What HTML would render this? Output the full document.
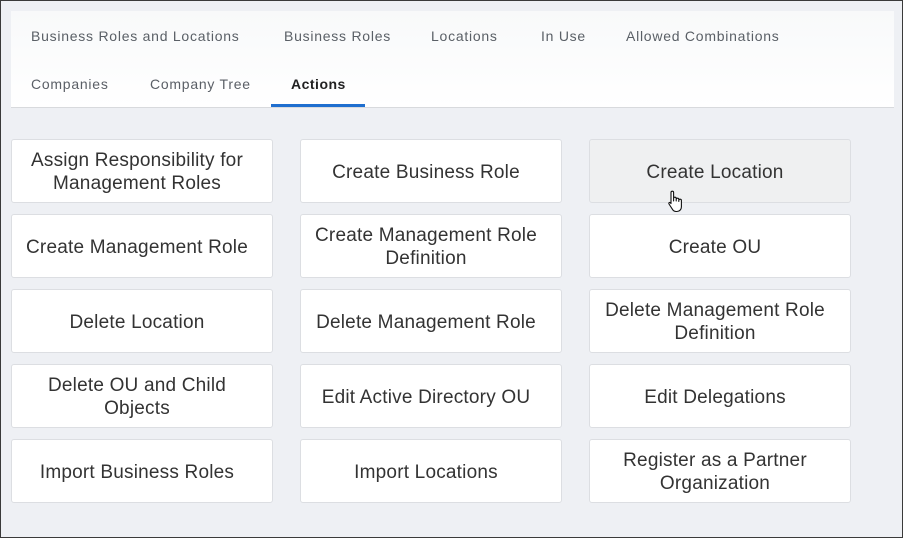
<!DOCTYPE html>
<html><head><style>
*{box-sizing:border-box;margin:0;padding:0}
body{width:903px;height:538px;background:#eef0f4;position:relative;overflow:hidden;font-family:"Liberation Sans",sans-serif}
.frame{position:absolute;left:0;top:0;width:903px;height:538px;border:1px solid #3a3a3a;z-index:5;pointer-events:none}
.panel{position:absolute;left:11px;top:11px;width:883px;height:97px;background:linear-gradient(#f8f9fa,#fff);border-bottom:1px solid #d8dadd}
.tab{position:absolute;font-size:14px;color:#5a5f66;letter-spacing:0.75px;white-space:nowrap}
.act{color:#222;font-weight:bold;letter-spacing:0.5px}
.ul{position:absolute;left:271px;top:104px;width:94px;height:3px;background:#1f6fcf}
.b{position:absolute;width:262px;height:64px;background:#fff;border:1px solid #dcdee2;border-radius:3px;display:flex;align-items:center;justify-content:center;text-align:center;font-size:19px;letter-spacing:0.2px;line-height:23px;color:#333;padding:2px 19px 0 9px}
.h{background:#eff0f1}
</style></head><body>
<div class="frame"></div>
<div class="panel"></div>
<div class="tab" style="left:31px;top:28px">Business Roles and Locations</div>
<div class="tab" style="left:284px;top:28px">Business Roles</div>
<div class="tab" style="left:431px;top:28px">Locations</div>
<div class="tab" style="left:541px;top:28px">In Use</div>
<div class="tab" style="left:626px;top:28px">Allowed Combinations</div>
<div class="tab" style="left:31px;top:76px">Companies</div>
<div class="tab" style="left:150px;top:76px">Company Tree</div>
<div class="tab act" style="left:291px;top:76px">Actions</div>
<div class="ul"></div>

<div class="b" style="left:11px;top:139px">Assign Responsibility for Management Roles</div>
<div class="b" style="left:300px;top:139px">Create Business Role</div>
<div class="b h" style="left:589px;top:139px">Create Location</div>
<div class="b" style="left:11px;top:214px">Create Management Role</div>
<div class="b" style="left:300px;top:214px">Create Management Role Definition</div>
<div class="b" style="left:589px;top:214px">Create OU</div>
<div class="b" style="left:11px;top:289px">Delete Location</div>
<div class="b" style="left:300px;top:289px">Delete Management Role</div>
<div class="b" style="left:589px;top:289px">Delete Management Role Definition</div>
<div class="b" style="left:11px;top:364px">Delete OU and Child<br>Objects</div>
<div class="b" style="left:300px;top:364px">Edit Active Directory OU</div>
<div class="b" style="left:589px;top:364px">Edit Delegations</div>
<div class="b" style="left:11px;top:439px">Import Business Roles</div>
<div class="b" style="left:300px;top:439px">Import Locations</div>
<div class="b" style="left:589px;top:439px">Register as a Partner Organization</div>
<svg style="position:absolute;left:667px;top:190px" width="18" height="24" viewBox="0 0 18 24"><path d="M4 2.5a1.3 1.3 0 0 1 2.6 0V11V8.5a1.3 1.3 0 0 1 2.6 0V11V9.5a1.3 1.3 0 0 1 2.6 0V11.5V10.5a1.3 1.3 0 0 1 2.6 0V17c0 2.5-2 4.5-4.5 4.5H9c-1.5 0-2.6-.7-3.4-1.9L2 14c-.6-1 .6-2 1.5-1.2L4 13.5Z" fill="#fff" stroke="#111" stroke-width="1.1" stroke-linejoin="round"/></svg>
</body></html>
